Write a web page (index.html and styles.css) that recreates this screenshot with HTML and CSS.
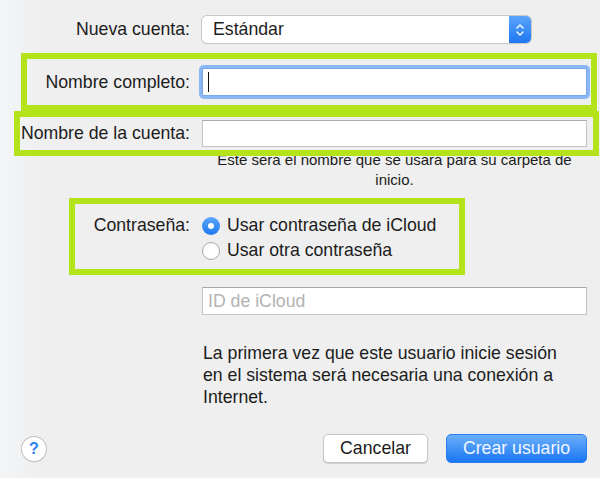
FILE: index.html
```html
<!DOCTYPE html>
<html lang="es">
<head>
    <meta charset="UTF-8">
    <meta name="viewport" content="width=device-width, initial-scale=1.0">
    <title>Nueva cuenta</title>
    <link rel="stylesheet" href="styles.css">
</head>
<body>
    <div class="sheet">
        <div class="row row-top">
            <label class="label label-top">Nueva cuenta:</label>
            <div class="popup">
                <span class="popup-text">Estándar</span>
                <span class="stepper">
                    <svg width="10" height="16" viewBox="0 0 10 16">
                        <path d="M2 6 L5 3 L8 6 M2 10 L5 13 L8 10" fill="none" stroke="#fff" stroke-width="1.4" stroke-linecap="round" stroke-linejoin="round"/>
                    </svg>
                </span>
            </div>
        </div>

        <!-- highlighted rows -->
        <div class="box box-full">
            <div class="row">
                <label class="label label-full">Nombre completo:</label>
                <div class="field field-focus"><span class="caret"></span></div>
            </div>
        </div>

        <div class="box box-account">
            <div class="row">
                <label class="label label-account">Nombre de la cuenta:</label>
                <div class="field"></div>
            </div>
        </div>

        <p class="hint">Este será el nombre que se usará para su carpeta de inicio.</p>

        <div class="box box-password">
            <label class="label label-password">Contraseña:</label>
            <div class="radios">
                <div class="radio-row"><span class="radio checked"></span>Usar contraseña de iCloud</div>
                <div class="radio-row"><span class="radio"></span>Usar otra contraseña</div>
            </div>
        </div>

        <div class="field field-id"><span class="placeholder">ID de iCloud</span></div>

        <p class="note">La primera vez que este usuario inicie sesión en el sistema será necesaria una conexión a Internet.</p>

        <div class="footer">
            <span class="help">?</span>
            <div class="buttons">
                <button class="btn btn-cancel">Cancelar</button>
                <button class="btn btn-create">Crear usuario</button>
            </div>
        </div>
    </div>
</body>
</html>
```

FILE: styles.css
```css
/* General Styling */
body {
    margin: 0;
    background: linear-gradient(90deg, #f3f5f7 0px, #efefef 40px);
    font-family: 'Liberation Sans', Arial, sans-serif;
    font-size: 17.7px;
    color: #1c1c1c;
}

.sheet {
    width: 600px;
    height: 478px;
    padding-top: 16px;
    box-sizing: border-box;
}

.row {
    display: flex;
    align-items: center;
}

.label {
    padding-right: 12px;
    text-align: right;
    white-space: nowrap;
    box-sizing: border-box;
    flex-shrink: 0;
}

.label-top { width: 202px; }
.label-full { width: 175px; }
.label-account { width: 182px; }
.label-password { width: 127px; line-height: 25px; }

/* popup button */
.popup {
    width: 329px;
    height: 27px;
    display: flex;
    align-items: center;
    justify-content: space-between;
    background: #fff;
    border-radius: 5px;
    box-shadow: 0 0 0 1px #c8c8c8, 0 1px 1px rgba(0, 0, 0, 0.18);
    overflow: hidden;
}

.popup-text {
    padding-left: 11px;
}

.stepper {
    width: 22px;
    height: 27px;
    display: flex;
    align-items: center;
    justify-content: center;
    background: linear-gradient(#5aa5fb, #1f77f1);
}

/* green highlight boxes */
.box {
    position: relative;
    border: 6px solid #b4e31c;
    box-sizing: border-box;
}

.box-full {
    width: 576px;
    margin: 10px 0 0 21px;
    padding: 9px 0;
}

.box-account {
    width: 585px;
    margin: 0 0 0 14px;
    padding: 3px 0;
}

.box-password {
    width: 396px;
    margin: 8px 0 0 69px;
    padding: 9px 0 6px;
    display: flex;
    align-items: flex-start;
}

/* text fields */
.field {
    width: 385px;
    height: 27px;
    background: #fff;
    border: 1px solid #c4c4c4;
    border-top-color: #a9a9a9;
    box-sizing: border-box;
    display: flex;
    align-items: center;
}

.field-focus {
    height: 28px;
    border-color: #7aa6e6;
    box-shadow: 0 0 0 3px #8ab7f5;
    border-radius: 2px;
}

.caret {
    width: 1px;
    height: 20px;
    margin-left: 5px;
    background: #111;
}

.field-id {
    height: 28px;
    margin: 12px 0 0 202px;
}

.placeholder {
    padding-left: 5px;
    color: #b3b3b3;
}

.hint {
    width: 385px;
    margin: -6px 0 0 202px;
    font-size: 15px;
    line-height: 20px;
    text-align: center;
}

/* radios */
.radio-row {
    height: 25px;
    display: flex;
    align-items: center;
}

.radio {
    width: 18px;
    height: 18px;
    margin-right: 7px;
    border-radius: 50%;
    background: #fff;
    border: 1px solid #a8a8a8;
    box-sizing: border-box;
    display: flex;
    align-items: center;
    justify-content: center;
}

.radio.checked {
    border: none;
    background: linear-gradient(#5aa6fb, #2179f1);
}

.radio.checked::after {
    content: "";
    width: 6px;
    height: 6px;
    border-radius: 50%;
    background: #fff;
}

.note {
    width: 368px;
    margin: 27px 0 0 203px;
    line-height: 22px;
}

/* footer */
.footer {
    display: flex;
    align-items: center;
    justify-content: space-between;
    margin-top: 26px;
    padding: 0 13px 0 22px;
}

.help {
    width: 24px;
    height: 24px;
    border-radius: 50%;
    background: #fff;
    box-shadow: 0 0 0 1px #c2c2c2, 0 1px 1px rgba(0, 0, 0, 0.2);
    color: #2b7ef2;
    font-weight: bold;
    font-size: 16px;
    display: flex;
    align-items: center;
    justify-content: center;
}

.buttons {
    display: flex;
    gap: 18px;
}

.btn {
    height: 29px;
    font-family: inherit;
    font-size: 17.7px;
    border-radius: 5px;
    padding: 0;
}

.btn-cancel {
    width: 105px;
    background: #fff;
    color: #1c1c1c;
    border: 1px solid #c6c6c6;
    box-shadow: 0 1px 1px rgba(0, 0, 0, 0.15);
}

.btn-create {
    width: 141px;
    color: #f2f7ff;
    border: 1px solid #2a7ef0;
    background: linear-gradient(#6aaffb, #1b76f2);
}
```
